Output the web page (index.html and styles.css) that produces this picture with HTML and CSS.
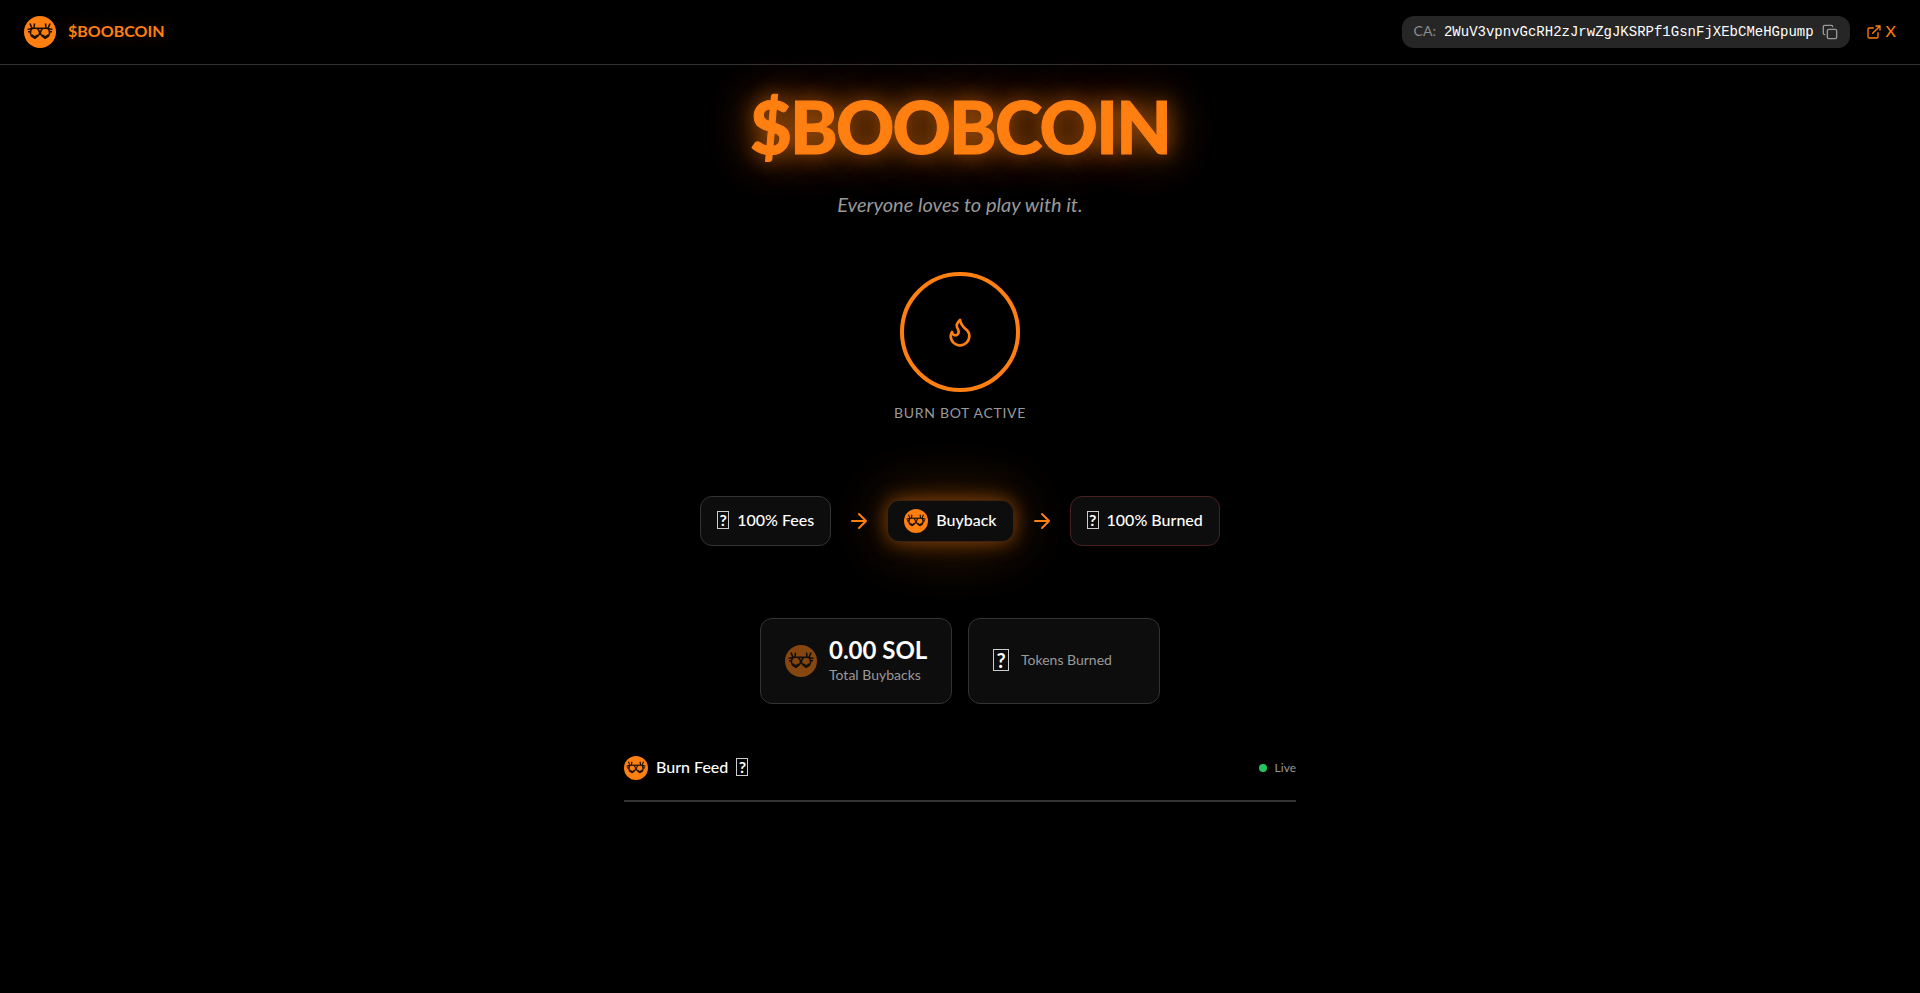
FILE: index.html
```html
<!DOCTYPE html>
<html lang="en">
<head>
<meta charset="utf-8">
<title>$BOOBCOIN</title>
<link rel="stylesheet" href="styles.css">
</head>
<body>

<!-- logo, reused by every coin icon -->
<svg class="sprite" aria-hidden="true">
  <symbol id="coin" viewBox="0 0 32 32">
    <circle cx="16" cy="16" r="16" fill="#ff7f11"/>
    <g fill="none" stroke="#1c1208" stroke-width="1.600" stroke-linejoin="round">
      <path d="M8 12.300h16"/>
      <path d="M6 7.500l2 5-4.500 1M26 7.500l-2 5 4.500 1M10.500 7.500l-.5 4.500M21.500 7.500l.5 4.500"/>
      <path d="M4 15.800h3M28 15.800h-3"/>
      <path d="M8 12.500c-2 2.500-2 5-.5 7.500l3.500 2.200 4.300-3.700c.5-2 0-4-1.800-6"/>
      <path d="M24 12.500c2 2.500 2 5 .5 7.500L21 22.200l-4.300-3.700c-.5-2 0-4 1.800-6"/>
      <path d="M7.500 19.200l3.500 2.300 3-2.300M24.500 19.200L21 21.500l-3-2.300" stroke-width="2.400"/>
    </g>
  </symbol>
</svg>

<header class="header">
  <div class="brand">
    <svg class="coin-md"><use href="#coin"/></svg>
    <span class="brand-name">$BOOBCOIN</span>
  </div>
  <div class="header-right">
    <div class="contract">
      <span class="contract-label">CA:</span>
      <code class="contract-code">2WuV3vpnvGcRH2zJrwZgJKSRPf1GsnFjXEbCMeHGpump</code>
      <button class="copy" type="button" aria-label="Copy contract address">
        <svg class="icon" viewBox="0 0 24 24"><rect x="8" y="8" width="14" height="14" rx="2"/><path d="M4 16c-1.100 0-2-.9-2-2V4c0-1.100.9-2 2-2h10c1.100 0 2 .9 2 2"/></svg>
      </button>
    </div>
    <a class="x-link" href="#">
      <svg class="icon" viewBox="0 0 24 24"><path d="M15 3h6v6M10 14L21 3M18 13v6a2 2 0 0 1-2 2H5a2 2 0 0 1-2-2V8a2 2 0 0 1 2-2h6"/></svg>
      <span>X</span>
    </a>
  </div>
</header>

<main class="main">
  <h1 class="title">$BOOBCOIN</h1>
  <p class="tagline">Everyone loves to play with it.</p>

  <section class="bot">
    <div class="ring">
      <svg class="icon-flame" viewBox="0 0 24 24"><path d="M8.500 14.500A2.500 2.500 0 0 0 11 12c0-1.380-.5-2-1-3-1.072-2.143-.224-4.054 2-6 .5 2.500 2 4.900 4 6.500 2 1.600 3 3.500 3 5.500a7 7 0 1 1-14 0c0-1.153.433-2.294 1-3a2.500 2.500 0 0 0 2.500 2.500z"/></svg>
    </div>
    <p class="bot-label">BURN BOT ACTIVE</p>
  </section>

  <section class="flow">
    <div class="step"><span class="emoji"><span class="glyph">?</span></span><span>100% Fees</span></div>
    <svg class="arrow" viewBox="0 0 24 24"><path d="M5 12h14M12 5l7 7-7 7"/></svg>
    <div class="step step-glow"><svg class="coin-sm"><use href="#coin"/></svg><span>Buyback</span></div>
    <svg class="arrow" viewBox="0 0 24 24"><path d="M5 12h14M12 5l7 7-7 7"/></svg>
    <div class="step step-burn"><span class="emoji"><span class="glyph">?</span></span><span>100% Burned</span></div>
  </section>

  <section class="stats">
    <div class="stat">
      <svg class="coin-md coin-dim"><use href="#coin"/></svg>
      <div>
        <div class="stat-value">0.00 SOL</div>
        <div class="stat-label">Total Buybacks</div>
      </div>
    </div>
    <div class="stat">
      <span class="emoji"><span class="glyph glyph-lg">?</span></span>
      <div class="stat-label">Tokens Burned</div>
    </div>
  </section>

  <section class="feed">
    <h2 class="feed-title"><svg class="coin-sm"><use href="#coin"/></svg><span>Burn Feed</span><span class="emoji"><span class="glyph">?</span></span></h2>
    <div class="live"><span class="dot"></span>Live</div>
  </section>
</main>

</body>
</html>
```
FILE: styles.css
```css
* {
    box-sizing: border-box;
    margin: 0;
    padding: 0;
}
body {
    background: #000;
    color: #fff;
    font-family: Lato, sans-serif;
    font-size: 16px;
    line-height: 24px;
}
svg {
    display: block;
    flex-shrink: 0;
}
.sprite {
    display: none;
}
.header {
    display: flex;
    justify-content: space-between;
    align-items: center;
    padding: 16px 24px;
    border-bottom: 1px solid #333;
}
.brand,
.header-right,
.contract,
.x-link {
    display: flex;
    align-items: center;
}
.brand {
    gap: 12px;
}
.brand-name {
    color: #ff7f11;
    font-weight: 700;
    text-shadow: 0 0 20px rgba(255, 127, 17, 0.3);
}
.header-right {
    gap: 16px;
}
.contract {
    gap: 8px;
    height: 32px;
    padding: 0 12px;
    border-radius: 12px;
    background: #262626;
}
.contract-label {
    color: #8c8c8c;
    font-size: 14px;
}
.contract-code {
    font-family: "Liberation Mono", monospace;
    font-size: 14px;
}
.copy {
    border: 0;
    background: none;
    color: #999;
    cursor: pointer;
}
.icon {
    width: 16px;
    height: 16px;
    fill: none;
    stroke: currentColor;
    stroke-width: 2;
    stroke-linecap: round;
    stroke-linejoin: round;
}
.x-link {
    gap: 4px;
    color: #ff7f11;
    text-decoration: none;
}
.coin-md {
    width: 32px;
    height: 32px;
}
.coin-sm {
    width: 24px;
    height: 24px;
}
.coin-dim {
    opacity: 0.5;
}
/* labels sit slightly above the middle of their row */
.brand-name,
.contract-label,
.x-link span,
.step > span:last-child,
.feed-title > span {
    padding-bottom: 2px;
}

.main {
    display: flex;
    flex-direction: column;
    align-items: center;
    padding: 25px 16px;
}
.title {
    color: #ff7f11;
    font-size: 72px;
    font-weight: 900;
    line-height: 72px;
    letter-spacing: -0.025em;
    -webkit-text-stroke: 1px #ff7f11;
    text-shadow: 0 0 20px rgba(255, 127, 17, 0.5), 0 0 40px rgba(255, 127, 17, 0.5), 0 0 60px rgba(255, 127, 17, 0.3);
}
.tagline {
    margin-top: 28px;
    color: #999;
    font-size: 20px;
    font-style: italic;
    line-height: 28px;
}
.bot {
    display: flex;
    flex-direction: column;
    align-items: center;
    gap: 11px;
    margin-top: 54px;
}
.ring {
    display: flex;
    align-items: center;
    justify-content: center;
    width: 120px;
    height: 120px;
    border: 4px solid #ff7f11;
    border-radius: 50%;
}
.icon-flame {
    width: 32px;
    height: 32px;
    fill: none;
    stroke: #ff7f11;
    stroke-width: 2;
    stroke-linejoin: round;
}
.bot-label {
    color: #999;
    font-size: 14px;
    line-height: 20px;
    letter-spacing: 0.05em;
}

.flow {
    display: flex;
    align-items: center;
    gap: 16px;
    margin-top: 73px;
}
.step {
    display: flex;
    align-items: center;
    gap: 8px;
    padding: 8px 16px;
    border: 1px solid #333;
    border-radius: 12px;
    background: #0d0d0d;
    font-weight: 500;
}
.step-glow {
    border-color: rgba(255, 127, 17, 0.2);
    box-shadow: 0 0 20px rgba(255, 127, 17, 0.5), 0 0 60px rgba(255, 127, 17, 0.3);
}
.step-glow > span:last-child {
    line-height: 22px;
}
.step-burn {
    border-color: #4a2023;
}
/* boxed question mark used in place of the emoji */
.emoji {
    display: flex;
    align-items: center;
    height: 32px;
    padding-bottom: 2px;
}
.glyph {
    width: 12px;
    height: 18px;
    border: 1px solid #ccc;
    font-size: 16px;
    font-weight: 700;
    line-height: 16px;
    text-align: center;
}
.glyph-lg {
    width: 16px;
    height: 22px;
    font-size: 20px;
    line-height: 20px;
}
.arrow {
    width: 24px;
    height: 24px;
    fill: none;
    stroke: #ff7f11;
    stroke-width: 2;
    stroke-linecap: round;
    stroke-linejoin: round;
}

.stats {
    display: grid;
    grid-template-columns: 192px 192px;
    gap: 16px;
    margin-top: 72px;
}
.stat {
    display: flex;
    align-items: center;
    gap: 12px;
    padding: 16px 24px;
    border: 1px solid #333;
    border-radius: 12px;
    background: #0d0d0d;
}
.stat-value {
    font-size: 24px;
    font-weight: 700;
    line-height: 30px;
    white-space: nowrap;
}
.stat-label {
    padding-bottom: 2px;
    color: #999;
    font-size: 14px;
    line-height: 20px;
}

.feed {
    display: flex;
    justify-content: space-between;
    align-items: center;
    width: 100%;
    max-width: 672px;
    margin-top: 48px;
    padding-bottom: 16px;
    border-bottom: 2px solid #333;
}
.feed-title {
    display: flex;
    align-items: center;
    gap: 8px;
    font-size: 16px;
    font-weight: 500;
}
.live {
    display: flex;
    align-items: center;
    gap: 8px;
    color: #999;
    font-size: 12px;
}
.dot {
    width: 8px;
    height: 8px;
    border-radius: 50%;
    background: #22c55e;
}
```
